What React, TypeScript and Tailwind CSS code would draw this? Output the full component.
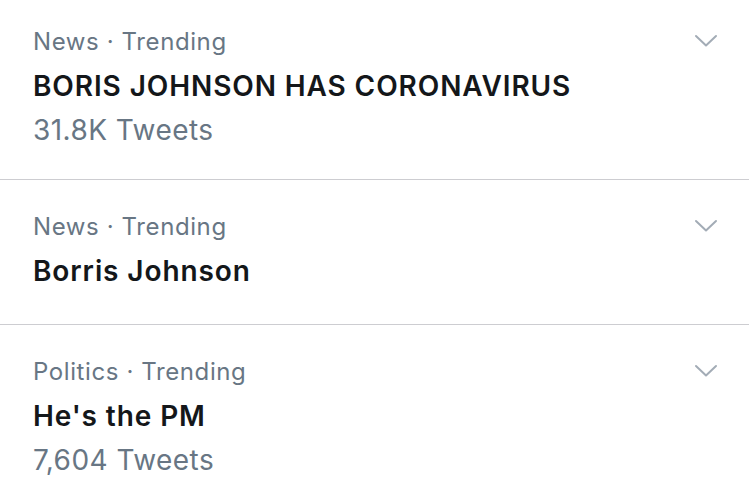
import React from "react";

type Trend = {
  category: string;
  title: string;
  tweets?: string;
};

const trends: Trend[] = [
  { category: "News", title: "BORIS JOHNSON HAS CORONAVIRUS", tweets: "31.8K Tweets" },
  { category: "News", title: "Borris Johnson" },
  { category: "Politics", title: "He's the PM", tweets: "7,604 Tweets" },
];

function Chevron() {
  return (
    <svg width="24" height="14" viewBox="0 0 24 14" fill="none">
      <path d="M2 2 L12 11.5 L22 2" stroke="#a3acb6" strokeWidth="2" strokeLinecap="round" strokeLinejoin="round" />
    </svg>
  );
}

export default function App() {
  return (
    <div className="h-[499px] w-[749px] overflow-hidden bg-white font-['Inter',sans-serif]">
      <div className="-mt-[5px]">
        {trends.map((t, i) => (
          <div
            key={i}
            className={
              "flex items-start justify-between border-b border-[#cdcdd1] pl-[33px] pr-[31px] pt-[25px] " +
              (t.tweets ? "pb-[26px]" : "pb-[31px]")
            }
          >
            <div>
              <div className="text-[24px] leading-[44px] tracking-[0.6px] text-[#687684]">
                {t.category} · Trending
              </div>
              <div className="text-[28px] font-semibold leading-[44px] tracking-[0.9px] text-[#14171a]">
                {t.title}
              </div>
              {t.tweets && (
                <div className="text-[28px] leading-[45px] tracking-[0.45px] text-[#687684]">
                  {t.tweets}
                </div>
              )}
            </div>
            <div className="pt-[14px]">
              <Chevron />
            </div>
          </div>
        ))}
      </div>
    </div>
  );
}
